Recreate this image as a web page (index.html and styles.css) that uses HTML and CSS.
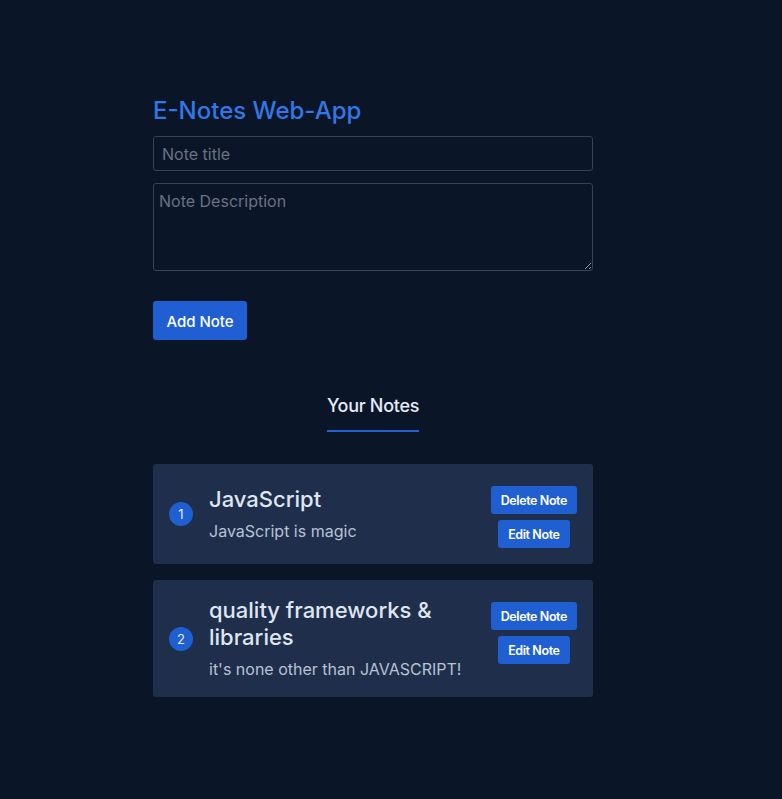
FILE: index.html
```html
<!DOCTYPE html>
<html>
<head>
<meta charset="utf-8">
<link rel="stylesheet" href="styles.css">
</head>
<body>
<main class="wrap">
  <h1 class="title">E-Notes Web-App</h1>
  <input class="field" type="text" placeholder="Note title">
  <textarea class="field area" placeholder="Note Description"></textarea>
  <button class="add">Add Note</button>
  <div class="heading-row"><h2 class="heading">Your Notes</h2></div>
  <ul class="notes">
    <li class="note">
      <span class="badge">1</span>
      <div class="body">
        <h3 class="ntitle">JavaScript</h3>
        <p class="ndesc">JavaScript is magic</p>
      </div>
      <div class="actions">
        <button class="btn">Delete Note</button>
        <button class="btn">Edit Note</button>
      </div>
    </li>
    <li class="note tall">
      <span class="badge">2</span>
      <div class="body">
        <h3 class="ntitle">quality frameworks &amp; libraries</h3>
        <p class="ndesc">it's none other than JAVASCRIPT!</p>
      </div>
      <div class="actions">
        <button class="btn">Delete Note</button>
        <button class="btn">Edit Note</button>
      </div>
    </li>
  </ul>
</main>
</body>
</html>
```
FILE: styles.css
```css
html, body { margin: 0; padding: 0; }
body {
  background: #0a1528;
  font-family: Inter, "Noto Sans", sans-serif;
  color: #e5e7eb;
  min-height: 799px;
}
.wrap {
  width: 440px;
  margin-left: 153px;
  padding-top: 96px;
  display: flex;
  flex-direction: column;
}
.title {
  margin: 0 0 10px;
  font-size: 24px;
  font-weight: 500;
  line-height: 30px;
  color: #3377e6;
  letter-spacing: 0;
}
.field {
  box-sizing: border-box;
  width: 440px;
  background: #0a1528;
  border: 1px solid #3a4150;
  border-radius: 3px;
  color: #d1d5db;
  font-family: Inter, sans-serif;
  font-size: 16px;
}
.field::placeholder { color: #6b7280; }
input.field { height: 35px; padding: 0 8px; }
.area { height: 88px; margin-top: 12px; padding: 7px 5px; resize: vertical; }
.add {
  margin-top: 30px;
  align-self: flex-start;
  width: 94px;
  height: 39px;
  background: #1f5fd1;
  color: #fff;
  border: none;
  border-radius: 3px;
  font-family: Inter, sans-serif;
  font-size: 15px;
  font-weight: 500;
  padding-top: 2px;
}
.heading-row { display: flex; justify-content: center; margin-top: 55px; }
.heading {
  margin: 0;
  font-size: 18px;
  font-weight: 500;
  color: #e5ecf8;
  padding-bottom: 13px;
  border-bottom: 2px solid #2460d4;
  line-height: 22px;
  letter-spacing: -0.3px;
}
.notes { list-style: none; margin: 32px 0 0; padding: 0; display: flex; flex-direction: column; gap: 16px; }
.note {
  background: #1e2e4b;
  border-radius: 3px;
  height: 100px;
  display: flex;
  align-items: center;
  padding: 0 16px;
  box-sizing: border-box;
}
.note.tall { height: 117px; }
.badge {
  width: 24px; height: 24px;
  border-radius: 50%;
  background: #1f5fd1;
  color: #e5ecf8;
  font-size: 13px;
  display: flex; align-items: center; justify-content: center;
  flex: none;
  margin-right: 16px;
}
.body { flex: 1; padding-bottom: 2px; }
.ntitle { margin: 0; font-size: 22px; font-weight: 500; line-height: 27px; color: #dfe6f2; }
.ndesc { margin: 8px 0 0; font-size: 16px; color: #b8c2d3; line-height: 20px; }
.actions {
  display: flex; flex-direction: column; align-items: center; gap: 6px;
  margin-left: 16px;
  align-self: flex-start;
  margin-top: 22px;
}
.btn {
  background: #1f5fd1;
  color: #fff;
  border: none;
  border-radius: 3px;
  height: 28px;
  padding: 0 10px;
  font-family: Inter, sans-serif;
  font-size: 12.5px;
  font-weight: 600;
  letter-spacing: -0.4px;
}
```
